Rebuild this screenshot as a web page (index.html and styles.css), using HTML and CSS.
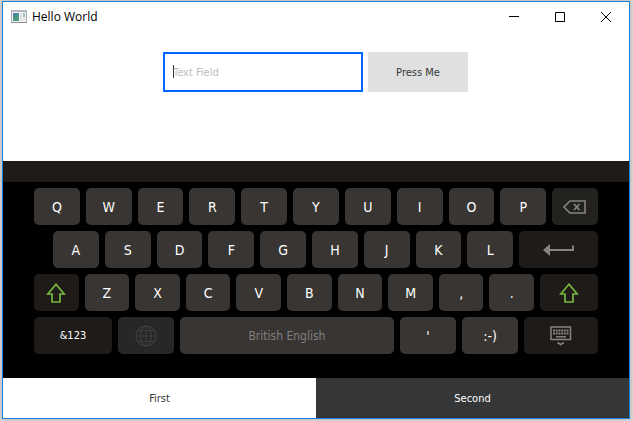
FILE: index.html
```html
<!DOCTYPE html>
<html lang="en">
<head>
    <meta charset="UTF-8">
    <meta name="viewport" content="width=device-width, initial-scale=1.0">
    <title>Hello World</title>
    <link rel="stylesheet" href="styles.css">
</head>
<body>
    <div class="window">
        <!-- Title bar -->
        <header class="titlebar">
            <svg class="app-icon" width="16" height="14" viewBox="0 0 16 14">
                <rect x="0.5" y="0.5" width="15" height="12" fill="#f4f4f6" stroke="#a9abb5"/>
                <rect x="0" y="0" width="16" height="2" fill="#b4b8c0"/>
                <rect x="0" y="12" width="16" height="1" fill="#8f9198"/>
                <rect x="2" y="3" width="6" height="8" fill="#4b86a0"/>
                <path d="M2 11V8l6-4v7z" fill="#4d9a7c"/>
                <rect x="9" y="3" width="2" height="8" fill="#dedee2"/>
                <rect x="12" y="3" width="2" height="4" fill="#9cc3bd"/>
                <rect x="12" y="7" width="2" height="4" fill="#e4e4e8"/>
            </svg>
            <h1>Hello World</h1>
            <button type="button" aria-label="Minimize">
                <svg width="10" height="10" viewBox="0 0 10 10"><path d="M0 4.5h10"/></svg>
            </button>
            <button type="button" aria-label="Maximize">
                <svg width="10" height="10" viewBox="0 0 10 10"><path d="M.5 .5h9v9h-9z"/></svg>
            </button>
            <button type="button" aria-label="Close">
                <svg width="10" height="10" viewBox="0 0 10 10"><path d="M0 0l10 10M10 0L0 10"/></svg>
            </button>
        </header>

        <!-- First page -->
        <main class="page">
            <label class="field">
                <input type="text" placeholder="Text Field" aria-label="Text Field">
            </label>
            <button type="button" class="press">Press Me</button>
        </main>

        <!-- Virtual keyboard -->
        <section class="keyboard">
            <div class="suggestions"></div>
            <div class="keys">
                <div class="row">
                    <button class="key">Q</button>
                    <button class="key">W</button>
                    <button class="key">E</button>
                    <button class="key">R</button>
                    <button class="key">T</button>
                    <button class="key">Y</button>
                    <button class="key">U</button>
                    <button class="key">I</button>
                    <button class="key">O</button>
                    <button class="key">P</button>
                    <button class="key backspace" aria-label="Backspace">
                        <svg width="24" height="14" viewBox="0 0 24 14" fill="none" stroke="#868482">
                            <path d="M7 1h15v12H7L1 7z" stroke-width="1.6"/>
                            <path d="M11 4l5.500 6M16.500 4L11 10" stroke-width="1.8"/>
                        </svg>
                    </button>
                </div>
                <div class="row row-home">
                    <button class="key">A</button>
                    <button class="key">S</button>
                    <button class="key">D</button>
                    <button class="key">F</button>
                    <button class="key">G</button>
                    <button class="key">H</button>
                    <button class="key">J</button>
                    <button class="key">K</button>
                    <button class="key">L</button>
                    <button class="key dark enter" aria-label="Enter">
                        <svg width="32" height="14" viewBox="0 0 32 14">
                            <path d="M0 7L7 1v12z" fill="#868482"/>
                            <path d="M6 7h24V2.500" fill="none" stroke="#868482" stroke-width="2"/>
                        </svg>
                    </button>
                </div>
                <div class="row">
                    <button class="key dark" aria-label="Shift">
                        <svg width="20" height="20" viewBox="0 0 20 20">
                            <path d="M10 1.300L18.200 11H14v8H6v-8H1.800z" fill="none" stroke="#78b83c" stroke-width="1.700"/>
                        </svg>
                    </button>
                    <button class="key">Z</button>
                    <button class="key">X</button>
                    <button class="key">C</button>
                    <button class="key">V</button>
                    <button class="key">B</button>
                    <button class="key">N</button>
                    <button class="key">M</button>
                    <button class="key">,</button>
                    <button class="key">.</button>
                    <button class="key dark shift-right" aria-label="Shift">
                        <svg width="20" height="20" viewBox="0 0 20 20">
                            <path d="M10 1.300L18.200 11H14v8H6v-8H1.800z" fill="none" stroke="#78b83c" stroke-width="1.700"/>
                        </svg>
                    </button>
                </div>
                <div class="row">
                    <button class="key dark symbols">&amp;123</button>
                    <button class="key language" aria-label="Change language">
                        <svg width="22" height="22" viewBox="0 0 22 22" fill="none" stroke="#3e3d3c" stroke-width="1.200">
                            <circle cx="11" cy="11" r="10"/>
                            <ellipse cx="11" cy="11" rx="5.500" ry="10"/>
                            <path d="M11 1v20M1 11h20M3 5.500h16M3 16.500h16"/>
                        </svg>
                    </button>
                    <button class="key space">British English</button>
                    <button class="key">'</button>
                    <button class="key">:-)</button>
                    <button class="key dark hide" aria-label="Hide keyboard">
                        <svg width="22" height="20" viewBox="0 0 22 20">
                            <path d="M1 1h19.500v12.500H1z" fill="none" stroke="#868482" stroke-width="1.500"/>
                            <path d="M3 4.500h15.500M3 7.500h15.500" stroke="#868482" stroke-width="2" stroke-dasharray="2 .7"/>
                            <path d="M6 10.800h10" stroke="#868482" stroke-width="1.500"/>
                            <path d="M7.500 16.500l3.200 2 3.200-2" fill="none" stroke="#868482" stroke-width="1.500"/>
                        </svg>
                    </button>
                </div>
            </div>
        </section>

        <!-- Tabs -->
        <nav class="tabs">
            <button type="button" class="tab active">First</button>
            <button type="button" class="tab">Second</button>
        </nav>
    </div>
</body>
</html>
```
FILE: styles.css
```css
* {
    box-sizing: border-box;
}

body {
    font-family: "DejaVu Sans Condensed", "DejaVu Sans", sans-serif;
    margin: 0;
    padding: 1px 3px 2px 2px;
    background-color: #d8d6d6;
    display: flex;
    min-height: 100vh;
}

button {
    font-family: inherit;
    padding: 0;
    border: none;
    cursor: pointer;
}

.window {
    flex: 1;
    display: flex;
    flex-direction: column;
    background: white;
    border: 1px solid #1a80d8;
    box-shadow: 0 0 4px rgba(0, 0, 0, 0.2);
}

/* Title bar */
.titlebar {
    display: flex;
    align-items: center;
    height: 29px;
    padding-left: 8px;
}

.titlebar h1 {
    flex: 1;
    margin: 0 0 0 5px;
    font-family: "Open Sans", sans-serif;
    font-size: 12px;
    font-weight: normal;
    color: black;
}

.titlebar button {
    display: flex;
    align-items: center;
    justify-content: center;
    width: 46px;
    height: 28px;
    background: none;
}

.titlebar button svg {
    fill: none;
    stroke: black;
}

/* Page content */
.page {
    flex: 1;
    display: flex;
    justify-content: center;
    align-items: flex-start;
    gap: 5px;
    padding: 21px 1px 21px 0;
}

.field {
    position: relative;
    width: 200px;
}

.field input {
    display: block;
    width: 100%;
    height: 40px;
    padding: 0 8px;
    border: 2px solid #0066ff;
    outline: none;
    font-family: inherit;
    font-size: 11px;
    color: #353637;
}

.field input::placeholder {
    color: #bdbebf;
}

/* Text cursor */
.field::after {
    content: "";
    position: absolute;
    left: 10px;
    top: 13px;
    width: 1px;
    height: 13px;
    background: #353637;
}

.press {
    width: 100px;
    height: 40px;
    background-color: #e0e0e0;
    color: #353637;
    font-size: 11px;
}

/* Keyboard */
.keyboard {
    background: black;
}

.suggestions {
    height: 21px;
    background: #1e1b18;
}

.keys {
    display: flex;
    flex-direction: column;
    gap: 6px;
    padding: 6px 31px 24px;
}

.row {
    display: flex;
    gap: 6px;
}

.row-home {
    padding-left: 19px;
}

.key {
    flex: 100 1 0;
    min-width: 0;
    height: 37px;
    display: flex;
    align-items: center;
    justify-content: center;
    border-radius: 5px;
    background: #383533;
    color: white;
    font-size: 14px;
}

.key.dark {
    background: #1e1b18;
}

.key.backspace {
    background: #23221e;
}

.key.enter {
    flex-grow: 172;
}

.key.shift-right {
    flex-grow: 130;
}

.key.symbols {
    flex-grow: 139;
    font-size: 11px;
}

.key.language {
    background: #282726;
}

.key.space {
    flex-grow: 382;
    color: #808080;
    font-size: 12px;
}

.key.hide {
    flex-grow: 132;
}

/* Tabs */
.tabs {
    display: flex;
}

.tab {
    flex: 1;
    height: 40px;
    background: #353637;
    color: white;
    font-size: 11px;
}

.tab.active {
    background: white;
    color: #353637;
}
```
